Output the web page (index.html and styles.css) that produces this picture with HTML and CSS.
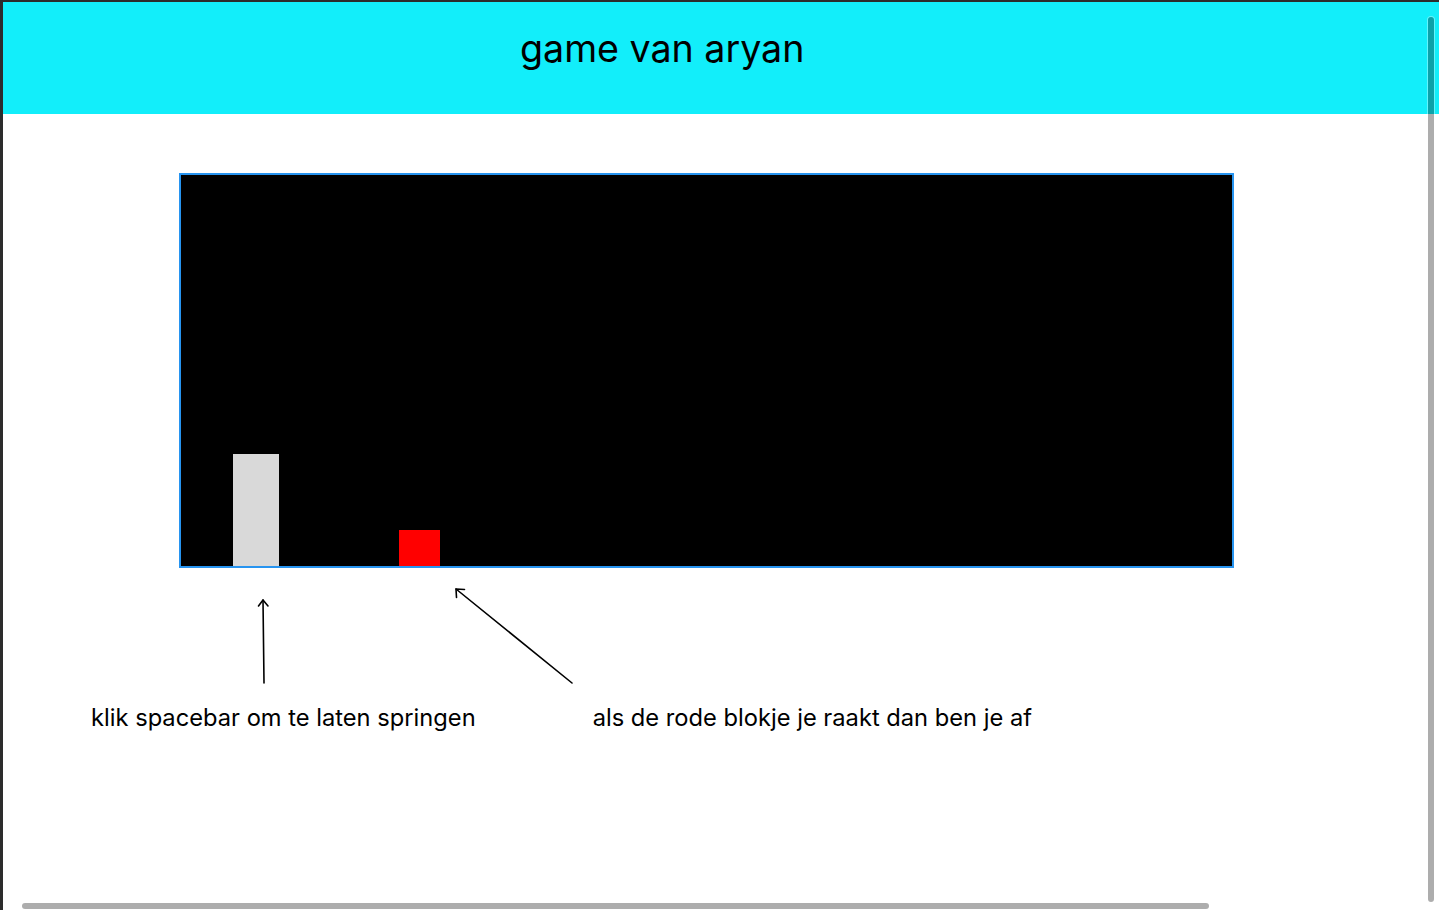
FILE: index.html
```html
<!DOCTYPE html>
<html>
<head>
<meta charset="utf-8">
<link rel="stylesheet" href="styles.css">
</head>
<body>
<div class="frame">
  <div class="side-mark"></div>
  <header class="header"><h1 class="title">game van aryan</h1></header>
  <main class="content">
    <div class="game">
      <div class="player"></div>
      <div class="enemy"></div>
    </div>
    <svg class="arrows" width="1436" height="120" viewBox="0 0 1436 120">
      <g fill="none" stroke="#000" stroke-width="1.6" stroke-linecap="round" stroke-linejoin="round">
        <path d="M261 115 L260 32"/>
        <path d="M255.5 38 L260 32 L265 38"/>
        <path d="M569 115 L453 21"/>
        <path d="M453.5 29.5 L453 21 L461.5 21.5"/>
      </g>
    </svg>
    <div class="notes">
      <p class="note note-left">klik spacebar om te laten springen</p>
      <p class="note note-right">als de rode blokje je raakt dan ben je af</p>
    </div>
  </main>
  <div class="vscroll"></div>
  <div class="hscroll"></div>
</div>
</body>
</html>
```
FILE: styles.css
```css
html, body {
  margin: 0;
  padding: 0;
  height: 100%;
  overflow: hidden;
}
body {
  background: #2c2c2c;
  font-family: Inter, "Noto Sans", sans-serif;
  color: #000;
}
.frame {
  position: relative;
  margin: 2px 0 0 3px;
  height: 908px;
  background: #fff;
  overflow: hidden;
}
.side-mark {
  position: absolute;
  left: -3px;
  top: 231px;
  width: 2px;
  height: 33px;
  background: #1f6fc0;
}
.header {
  height: 112px;
  background: #12eefa;
  display: flex;
}
.title {
  margin: 25px 0 0 517px;
  font-size: 37.6px;
  font-weight: 400;
  line-height: 44px;
  letter-spacing: 0;
}
.content {
  padding-top: 59px;
}
.game {
  margin-left: 176px;
  width: 1055px;
  height: 395px;
  box-sizing: border-box;
  border: 2px solid #2794f0;
  background: #000;
  display: flex;
  align-items: flex-end;
  padding-left: 52px;
}
.player {
  width: 46px;
  height: 112px;
  background: #d9d9d9;
}
.enemy {
  margin-left: 120px;
  width: 41px;
  height: 36px;
  background: #ff0000;
}
.arrows {
  display: block;
}
.notes {
  display: flex;
  margin-top: 15px;
}
.note {
  margin: 0;
  font-size: 23.7px;
  line-height: 30px;
}
.note-left {
  margin-left: 88px;
}
.note-right {
  margin-left: 117px;
}
.vscroll {
  position: absolute;
  left: 1425px;
  top: 15px;
  width: 6px;
  height: 885px;
  border-radius: 3px;
  background: rgba(0, 0, 0, 0.32);
  box-shadow: 0 0 0 1px rgba(255, 255, 255, 0.35);
}
.hscroll {
  position: absolute;
  left: 19px;
  top: 901px;
  width: 1187px;
  height: 6px;
  border-radius: 3px;
  background: rgba(0, 0, 0, 0.32);
}
```
